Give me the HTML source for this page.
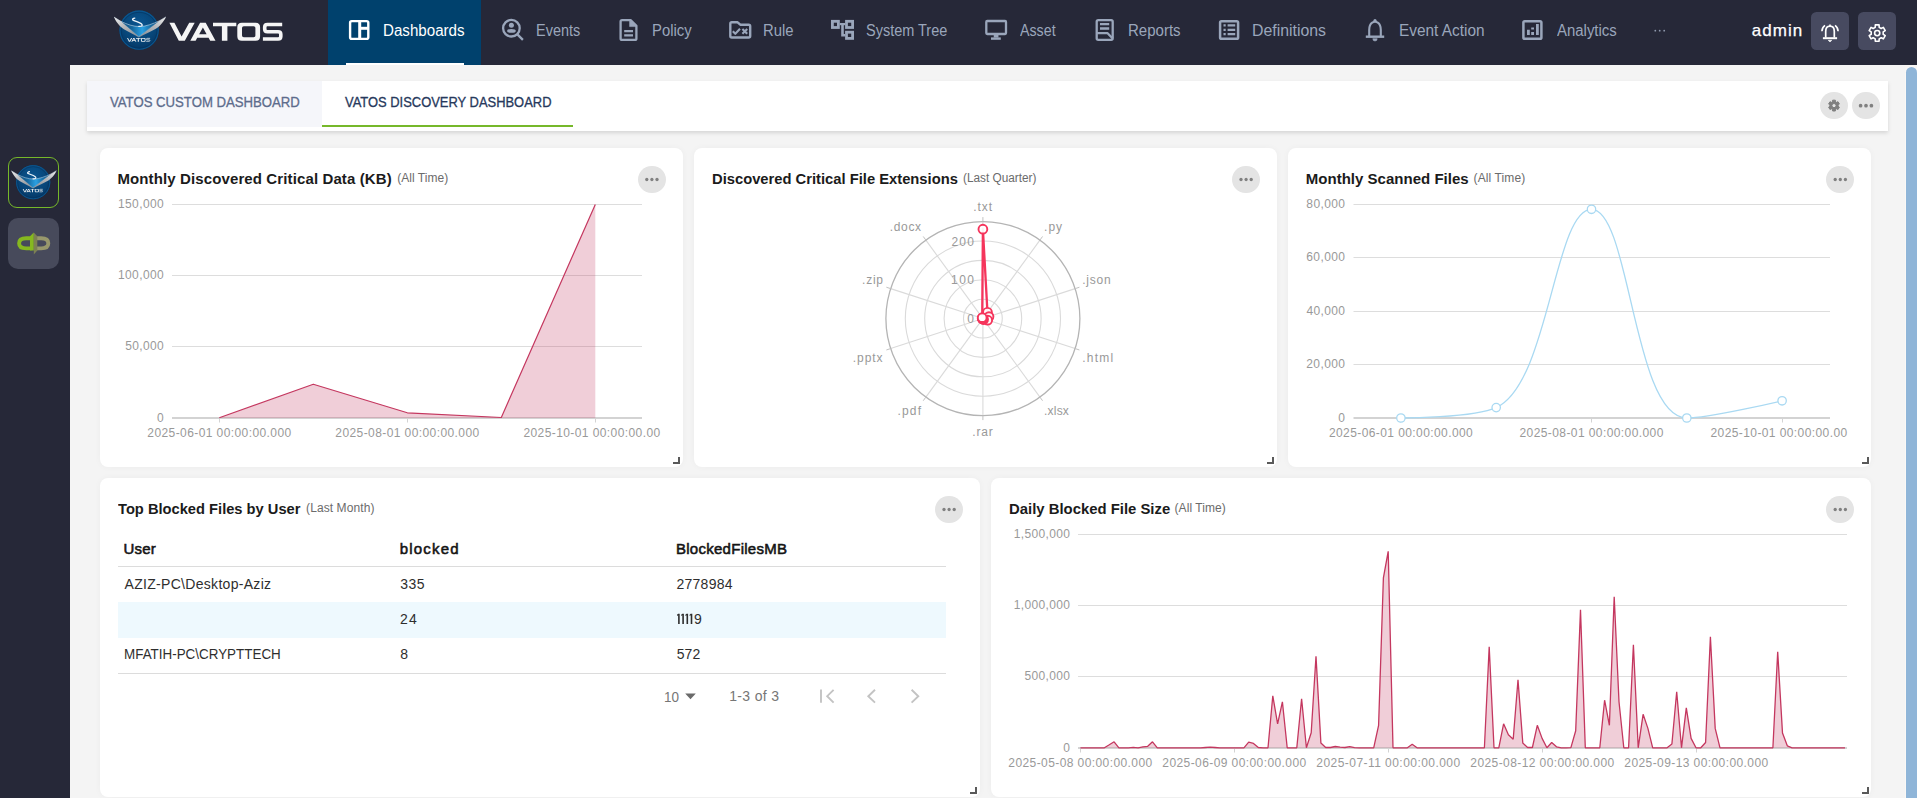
<!DOCTYPE html><html lang="en"><head><meta charset="utf-8"><title>VATOS Discovery Dashboard</title><style>
html,body{margin:0;padding:0;}
html{width:1917px;height:798px;overflow:hidden;}
body{width:1917px;height:798px;overflow:hidden;background:#f4f4f4;font-family:"Liberation Sans",sans-serif;position:relative;}
.t{position:absolute;white-space:nowrap;transform-origin:0 50%;font-family:"Liberation Sans",sans-serif;}
.abs{position:absolute;}
#topbar{position:absolute;left:0;top:0;width:1917px;height:65px;background:#262838;}
#sidebar{position:absolute;left:0;top:0;width:70px;height:798px;background:#262838;}
#navactive{position:absolute;left:328px;top:0;width:153px;height:65px;background:#00416d;}
#navline{position:absolute;left:346px;top:62.5px;width:118px;height:2.5px;background:#fff;}
.hbtn{position:absolute;top:12px;width:38px;height:38px;border-radius:5.5px;background:#474a60;}
#tabbar{position:absolute;left:87px;top:81px;width:1801px;height:49.5px;background:#fff;box-shadow:0 2px 4px rgba(0,0,0,0.13);}
#tab1{position:absolute;left:0;top:0;width:235px;height:46px;background:#f5f6fa;}
#tabul{position:absolute;left:235px;top:43.7px;width:251px;height:2.3px;background:#76b82a;}
.rbtn{position:absolute;border-radius:50%;background:#e4e4e4;}
.card{position:absolute;background:#fff;border-radius:8px;box-shadow:0 0 7px rgba(0,0,0,0.035);}
.rh{position:absolute;width:5px;height:5px;border-right:2px solid #595959;border-bottom:2px solid #595959;}
.c1{display:inline-block;position:relative;width:4.2px;height:14px;overflow:hidden;font-style:normal;color:transparent;vertical-align:top;}
.c9{display:inline-block;height:14px;font-style:normal;vertical-align:top;margin-left:-0.3px}
svg{position:absolute;left:0;top:0;overflow:visible;}
</style></head><body>
<svg width="0" height="0" style="position:absolute"><defs><radialGradient id="gCirc" cx="50%" cy="35%" r="70%"><stop offset="0" stop-color="#0a5590"/><stop offset="0.6" stop-color="#074679"/><stop offset="1" stop-color="#053461"/></radialGradient><linearGradient id="gV" x1="0" x2="1" y1="0" y2="0"><stop offset="0" stop-color="#0e4b78"/><stop offset="0.3" stop-color="#17699f"/><stop offset="0.56" stop-color="#2aa0e2"/><stop offset="0.8" stop-color="#17699f"/><stop offset="1" stop-color="#0e4b78"/></linearGradient><linearGradient id="gWL" x1="0" x2="1" y1="0" y2="1"><stop offset="0" stop-color="#f0f0f0"/><stop offset="0.4" stop-color="#b9bbbe"/><stop offset="1" stop-color="#85898e"/></linearGradient><linearGradient id="gWR" x1="1" x2="0" y1="0" y2="1"><stop offset="0" stop-color="#f0f0f0"/><stop offset="0.4" stop-color="#b9bbbe"/><stop offset="1" stop-color="#85898e"/></linearGradient><g id="wm" fill="#f5f5f5" fill-rule="evenodd"><path d="M169.4 22.8H174.4L181.6 36.5L189.2 22.8H194.7L184.8 40.7H178.8Z"/><path d="M190.3 40.7L200.1 22.8H205.7L215.5 40.7H210.2L208.56 37.7H197.24L195.6 40.7ZM202.9 27.4L199.16 34.2H206.64Z"/><path d="M213 22.8H236.3V26.3H227.4V40.7H221.9V26.3H213Z"/><path d="M241.8 22.8H255.6Q260.1 22.8 260.1 27.3V36.2Q260.1 40.7 255.6 40.7H241.8Q237.3 40.7 237.3 36.2V27.3Q237.3 22.8 241.8 22.8ZM243.8 26.3Q242 26.3 242 28.1V35.4Q242 37.2 243.8 37.2H253.6Q255.4 37.2 255.4 35.4V28.1Q255.4 26.3 253.6 26.3Z"/><path d="M282.2 24.55H267.4Q264.7 24.55 264.7 27V29.3Q264.7 31.75 267.4 31.75H278.1Q280.8 31.75 280.8 34.2V36.5Q280.8 38.95 278.1 38.95H262.9" fill="none" stroke="#f5f5f5" stroke-width="3.6"/></g><g id="emblem"><circle cx="0" cy="0" r="19.6" fill="url(#gCirc)"/><circle cx="0" cy="0" r="19.1" fill="none" stroke="#0a568f" stroke-width="1.1"/><circle cx="0" cy="0" r="17.9" fill="none" stroke="#04305a" stroke-width="0.5"/><path d="M-25.1 -13.1C-23.6 -9 -19.6 -3.6 -15.2 -1C-10.5 1.6 -5 4.3 -0.3 7.2L-0.3 6.45L-18.15 -8.83Z" fill="url(#gWL)"/><path d="M26.8 -13.3C25 -9 20.6 -3.6 15.8 -1C11 1.6 5 4.3 -0.3 7.2L-0.3 6.45L19.9 -9.2Z" fill="url(#gWR)"/><path d="M-18.15 -8.83C-12 -5.8 -6 -3.6 0.87 -3.64C7 -3.8 14 -6.5 19.9 -9.2L-0.3 6.45Z" fill="url(#gV)"/><path d="M-25.1 -13.1L-18.15 -8.83C-12 -5.8 -6 -3.6 0.87 -3.64C7 -3.8 14 -6.5 19.9 -9.2L26.8 -13.3" fill="none" stroke="#d6e6f2" stroke-width="0.55"/><path d="M-18.15 -8.83L-0.3 6.45L19.9 -9.2" fill="none" stroke="#dfe9f1" stroke-width="0.35" opacity="0.8"/><path d="M-4.3 -12.1C-6 -12 -7 -10.9 -6.3 -10.3C-5 -9.2 -0.5 -8.3 2 -6.6C3.4 -5.6 3.4 -4.6 2.3 -4.2C1.5 -3.9 0.5 -3.85 -0.3 -3.9" fill="none" stroke="#eef4f9" stroke-width="1.3" stroke-linecap="round"/><use href="#wm" transform="translate(-12.1,7.8) scale(0.205) translate(-169.4,-22.8)" opacity="0.95"/></g></defs></svg>
<div id="topbar"></div><div id="sidebar"></div><div id="navactive"></div><div id="navline"></div>
<svg id="logo" width="300" height="65" viewBox="0 0 300 65"><use href="#emblem" transform="translate(139.1,30.2)"/><use href="#wm"/></svg>
<svg id="navicons" width="1917" height="65" viewBox="0 0 1917 65" fill="none" stroke-linejoin="round" stroke-linecap="butt"><g stroke="#fff" stroke-width="2.4"><rect x="350.1" y="21.1" width="18.2" height="17.8" rx="1.6"/><path d="M359.7 21V39" stroke-width="3"/><path d="M359.7 28.3H368.5" stroke-width="3"/></g><g stroke="#9aa6bb" stroke-width="2.3" fill="none"><circle cx="511.4" cy="28.2" r="8.3"/><path d="M517.6 34.6L522.9 39.9" stroke-width="2.3"/><circle cx="511.4" cy="25.3" r="2.5" fill="#9aa6bb" stroke="none"/><ellipse cx="511.4" cy="30.9" rx="4.4" ry="1.9" fill="#9aa6bb" stroke="none"/><path d="M620.6 21.6Q620.6 20.1 622.1 20.1H630.6L636.4 25.9V38.4Q636.4 39.9 634.9 39.9H622.1Q620.6 39.9 620.6 38.4Z"/><path d="M629.6 19.6V26.6H636.9Z" fill="#9aa6bb" stroke-width="0.6"/><path d="M624.2 31.1H633M624.2 35.4H633" stroke-width="2.4"/><path d="M730.3 23.8Q730.3 22.3 731.8 22.3H737.6L740.3 24.7H748.7Q750.2 24.7 750.2 26.2V36Q750.2 37.5 748.7 37.5H731.8Q730.3 37.5 730.3 36Z" stroke-width="2.4"/><path d="M732.8 31.3L735.3 33.8L740 28.8" stroke-width="2.1"/><path d="M742.4 29L747.2 33.8M747.2 29L742.4 33.8" stroke-width="2.1"/><g stroke-width="2.8" stroke-linejoin="miter"><rect x="832.4" y="21.3" width="6" height="6.2"/><rect x="846.5" y="21.3" width="6.1" height="6.2"/><rect x="846.5" y="32.2" width="6.1" height="6.2"/></g><path d="M839.8 24.1H845.1" stroke-width="2.2"/><path d="M842.5 24.1V35.2H845.1" stroke-width="2.6" stroke-linejoin="miter"/><rect x="986.3" y="21" width="19.7" height="13" rx="0.9"/><path d="M996.1 35V37.6" stroke-width="4.7"/><path d="M991 38.6H1000.8" stroke-width="2.4"/><path d="M1096.7 21.7Q1096.7 20.2 1098.2 20.2H1111.2Q1112.7 20.2 1112.7 21.7V38.3Q1112.7 39.8 1111.2 39.8H1098.2Q1096.7 39.8 1096.7 38.3Z"/><path d="M1100 24.2H1109.2M1100 28.5H1109.2" stroke-width="2.3"/><path d="M1096.7 33.2H1107.6L1112.7 38.5" stroke-width="2.3"/><rect x="1220.1" y="21.2" width="18" height="17.6" rx="1.4" stroke-width="2.5"/><path d="M1223.5 25.3H1225.7M1227.6 25.3H1235.2M1223.5 29.8H1225.7M1227.6 29.8H1235.2M1223.5 34.2H1225.7M1227.6 34.2H1235.2" stroke-width="2.2"/><path d="M1369.2 36V30Q1369.2 24.5 1372.2 22.6Q1375 21 1377.8 22.6Q1380.8 24.5 1380.8 30V36" stroke-width="2.1"/><path d="M1365.8 36.7H1384.2" stroke-width="2.4"/><circle cx="1375" cy="20.5" r="1.6" fill="#9aa6bb" stroke="none"/><path d="M1372.8 38.7H1377.2Q1377.2 41 1375 41Q1372.8 41 1372.8 38.7Z" fill="#9aa6bb" stroke-width="0.6"/><rect x="1523.4" y="21.2" width="18" height="17.6" rx="1.4" stroke-width="2.5"/><path d="M1528.4 29.8V34.9M1532.6 27.4V29.6M1532.6 32V34.9M1537.4 24V34.9" stroke-width="2.8"/></g><g fill="#8f99ad"><circle cx="1655.3" cy="30.7" r="0.9"/><circle cx="1659.7" cy="30.7" r="0.9"/><circle cx="1664.2" cy="30.7" r="0.9"/></g></svg>
<span class="t" style="left:382.56px;top:23.00px;font-size:16px;line-height:16px;color:#fff;transform:scaleX(0.9457);">Dashboards</span><span class="t" style="left:536.01px;top:23.00px;font-size:16px;line-height:16px;color:#9aa6bb;transform:scaleX(0.9038);">Events</span><span class="t" style="left:652.08px;top:23.00px;font-size:16px;line-height:16px;color:#9aa6bb;transform:scaleX(0.9288);">Policy</span><span class="t" style="left:763.49px;top:23.00px;font-size:16px;line-height:16px;color:#9aa6bb;transform:scaleX(0.9257);">Rule</span><span class="t" style="left:866.35px;top:23.00px;font-size:16px;line-height:16px;color:#9aa6bb;transform:scaleX(0.9051);">System Tree</span><span class="t" style="left:1019.97px;top:23.00px;font-size:16px;line-height:16px;color:#9aa6bb;transform:scaleX(0.8903);">Asset</span><span class="t" style="left:1128.27px;top:23.00px;font-size:16px;line-height:16px;color:#9aa6bb;transform:scaleX(0.9385);">Reports</span><span class="t" style="left:1252.40px;top:23.00px;font-size:16px;line-height:16px;color:#9aa6bb;transform:scaleX(0.9902);">Definitions</span><span class="t" style="left:1398.74px;top:23.00px;font-size:16px;line-height:16px;color:#9aa6bb;transform:scaleX(0.9618);">Event Action</span><span class="t" style="left:1556.97px;top:23.00px;font-size:16px;line-height:16px;color:#9aa6bb;transform:scaleX(0.9336);">Analytics</span><span class="t" style="left:1751.69px;top:22.00px;font-size:17px;line-height:17px;color:#fff;letter-spacing:1.049px;-webkit-text-stroke:0.25px #fff;">admin</span>
<div class="hbtn" style="left:1811px"></div><div class="hbtn" style="left:1858px"></div><svg id="hdricons" width="1917" height="65" viewBox="0 0 1917 65" fill="none" stroke="#fff" stroke-width="1.7"><path d="M1825.7 37.6V31.4Q1825.7 26.2 1830 26.2Q1834.3 26.2 1834.3 31.4V37.6"/><path d="M1822.9 38.2H1837.1" stroke-width="2"/><path d="M1828.2 40.3H1831.8L1830 42Z" fill="#fff" stroke-width="0.6"/><path d="M1821.9 31.3Q1822 27.4 1825 25.3M1838.1 31.3Q1838 27.4 1835 25.3" stroke-width="1.6"/><path d="M1830 24.6V26" stroke-width="1.6"/><path d="M1875.31 24.92L1879.09 24.92L1879.19 27.33L1881.20 28.50L1883.34 27.37L1885.23 30.64L1883.19 31.94L1883.19 34.26L1885.23 35.56L1883.34 38.83L1881.20 37.70L1879.19 38.87L1879.09 41.28L1875.31 41.28L1875.21 38.87L1873.20 37.70L1871.06 38.83L1869.17 35.56L1871.21 34.26L1871.21 31.94L1869.17 30.64L1871.06 27.37L1873.20 28.50L1875.21 27.33Z" stroke-linejoin="round" stroke-width="1.6"/><circle cx="1877.2" cy="33.1" r="2.6" stroke-width="1.6"/></svg>
<div class="abs" style="left:8px;top:157px;width:49px;height:49px;border:1px solid #76b82a;border-radius:9px;background:#252737;"></div><div class="abs" style="left:8px;top:218px;width:51px;height:51px;border-radius:10px;background:#474a5b;"></div><svg id="sideicons" width="70" height="300" viewBox="0 0 70 300"><use href="#emblem" transform="translate(33.2,182.2) scale(0.87)"/><g fill="none" stroke-width="3.9"><path d="M31.6 238.2H26.2Q19.1 238.2 19.1 243.3Q19.1 248.4 26.2 248.4H31.6" stroke="#86b81f"/><path d="M36 238.2H41.2Q48.3 238.2 48.3 243.3Q48.3 248.4 41.2 248.4H36" stroke="#98986c"/></g><path d="M30 236.2L33.8 232.6V250.4H30Z" fill="#86b81f"/><path d="M33.8 232.6V254.4L37.3 250.6V236.2Z" fill="#7d8054"/></svg>
<div id="tabbar"><div id="tab1"></div><div id="tabul"></div></div><span class="t" style="left:109.75px;top:95.00px;font-size:14px;line-height:14px;color:#5d6c8c;transform:scaleX(0.9400);-webkit-text-stroke:0.3px #5d6c8c;">VATOS CUSTOM DASHBOARD</span><span class="t" style="left:344.95px;top:95.00px;font-size:14px;line-height:14px;color:#27395c;transform:scaleX(0.9236);-webkit-text-stroke:0.3px #27395c;">VATOS DISCOVERY DASHBOARD</span><div class="rbtn" style="left:1820.2px;top:91.8px;width:27.6px;height:27.6px"></div><div class="rbtn" style="left:1852.2px;top:91.8px;width:27.6px;height:27.6px"></div><svg width="1917" height="140" viewBox="0 0 1917 140"><path d="M1832.65 100.17L1835.35 100.17L1835.54 101.80L1836.52 102.37L1838.03 101.71L1839.38 104.06L1838.06 105.03L1838.06 106.17L1839.38 107.14L1838.03 109.49L1836.52 108.83L1835.54 109.40L1835.35 111.03L1832.65 111.03L1832.46 109.40L1831.48 108.83L1829.97 109.49L1828.62 107.14L1829.94 106.17L1829.94 105.03L1828.62 104.06L1829.97 101.71L1831.48 102.37L1832.46 101.80ZM1831.9 105.6a2.1 2.1 0 1 0 4.2 0a2.1 2.1 0 1 0 -4.2 0Z" fill="#808080" fill-rule="evenodd" stroke="#808080" stroke-width="1" stroke-linejoin="round"/><circle cx="1860.6" cy="105.7" r="1.85" fill="#808080"/><circle cx="1866.0" cy="105.7" r="1.85" fill="#808080"/><circle cx="1871.4" cy="105.7" r="1.85" fill="#808080"/></svg>
<div class="card" style="left:100px;top:148px;width:582.9px;height:318.7px"></div><span class="t" style="left:117.41px;top:171.00px;font-size:15px;line-height:15px;color:#1b1b1b;font-weight:bold;letter-spacing:0.119px;">Monthly Discovered Critical Data (KB)</span><span class="t" style="left:397.26px;top:172.00px;font-size:12px;line-height:12px;color:#6b6b6b;letter-spacing:0.025px;">(All Time)</span><div class="rbtn" style="left:638.0px;top:165.6px;width:27.8px;height:27.8px"></div><svg width="1917" height="798" viewBox="0 0 1917 798"><circle cx="646.8" cy="179.5" r="1.65" fill="#808080"/><circle cx="651.9" cy="179.5" r="1.65" fill="#808080"/><circle cx="657.0" cy="179.5" r="1.65" fill="#808080"/></svg><div class="rh" style="left:673.1px;top:457.1px"></div><svg width="1917" height="798" viewBox="0 0 1917 798" shape-rendering="auto"><path d="M172 204.5H642" stroke="#dddddd" stroke-width="1"/><path d="M172 275.5H642" stroke="#dddddd" stroke-width="1"/><path d="M172 346.5H642" stroke="#dddddd" stroke-width="1"/><path d="M172 418H642" stroke="#d3d3d3" stroke-width="2"/><path d="M219.5 419V422.5" stroke="#d3d3d3" stroke-width="1"/><path d="M407.5 419V422.5" stroke="#d3d3d3" stroke-width="1"/><path d="M595.5 419V422.5" stroke="#d3d3d3" stroke-width="1"/><path d="M219.3 417.8L313.3 384.2L407.3 412.8L501.3 417.5L595.3 204.4L595.3 418L219.3 418Z" fill="#c23b62" fill-opacity="0.25"/><path d="M219.3 417.8L313.3 384.2L407.3 412.8L501.3 417.5L595.3 204.4" fill="none" stroke="#c4375f" stroke-width="1.2" stroke-linejoin="round"/></svg><span class="t" style="left:117.88px;top:198.00px;font-size:12px;line-height:12px;color:#999999;letter-spacing:0.415px;">150,000</span><span class="t" style="left:117.88px;top:269.00px;font-size:12px;line-height:12px;color:#999999;letter-spacing:0.415px;">100,000</span><span class="t" style="left:125.16px;top:340.00px;font-size:12px;line-height:12px;color:#999999;letter-spacing:0.380px;">50,000</span><span class="t" style="left:157.08px;top:411.50px;font-size:12px;line-height:12px;color:#999999;">0</span><span class="t" style="left:147.30px;top:427.00px;font-size:12px;line-height:12px;color:#999999;letter-spacing:0.412px;">2025-06-01 00:00:00.000</span><span class="t" style="left:335.30px;top:427.00px;font-size:12px;line-height:12px;color:#999999;letter-spacing:0.412px;">2025-08-01 00:00:00.000</span><span class="t" style="left:523.40px;top:427.00px;font-size:12px;line-height:12px;color:#999999;letter-spacing:0.412px;">2025-10-01 00:00:00.00</span>
<div class="card" style="left:694.2px;top:148px;width:582.8999999999999px;height:318.7px"></div><span class="t" style="left:711.63px;top:171.00px;font-size:15px;line-height:15px;color:#1b1b1b;font-weight:bold;transform:scaleX(0.9831);">Discovered Critical File Extensions</span><span class="t" style="left:962.57px;top:172.00px;font-size:12px;line-height:12px;color:#6b6b6b;transform:scaleX(0.9822);">(Last Quarter)</span><div class="rbtn" style="left:1232.1999999999998px;top:165.6px;width:27.8px;height:27.8px"></div><svg width="1917" height="798" viewBox="0 0 1917 798"><circle cx="1241.0" cy="179.5" r="1.65" fill="#808080"/><circle cx="1246.1" cy="179.5" r="1.65" fill="#808080"/><circle cx="1251.2" cy="179.5" r="1.65" fill="#808080"/></svg><div class="rh" style="left:1267.3px;top:457.1px"></div><svg width="1917" height="798" viewBox="0 0 1917 798"><circle cx="982.9" cy="318.6" r="19.40" fill="none" stroke="#dadada" stroke-width="1.1"/><circle cx="982.9" cy="318.6" r="38.80" fill="none" stroke="#dadada" stroke-width="1.1"/><circle cx="982.9" cy="318.6" r="58.20" fill="none" stroke="#dadada" stroke-width="1.1"/><circle cx="982.9" cy="318.6" r="77.60" fill="none" stroke="#dadada" stroke-width="1.1"/><path d="M982.9 318.6L982.90 221.60" stroke="#dadada" stroke-width="1.1"/><path d="M982.9 318.6L1039.92 240.13" stroke="#dadada" stroke-width="1.1"/><path d="M982.9 318.6L1075.15 288.63" stroke="#dadada" stroke-width="1.1"/><path d="M982.9 318.6L1075.15 348.57" stroke="#dadada" stroke-width="1.1"/><path d="M982.9 318.6L1039.92 397.07" stroke="#dadada" stroke-width="1.1"/><path d="M982.9 318.6L982.90 415.60" stroke="#dadada" stroke-width="1.1"/><path d="M982.9 318.6L925.88 397.07" stroke="#dadada" stroke-width="1.1"/><path d="M982.9 318.6L890.65 348.57" stroke="#dadada" stroke-width="1.1"/><path d="M982.9 318.6L890.65 288.63" stroke="#dadada" stroke-width="1.1"/><path d="M982.9 318.6L925.88 240.13" stroke="#dadada" stroke-width="1.1"/><circle cx="982.9" cy="318.6" r="97" fill="none" stroke="#b4b4b4" stroke-width="1.3"/><path d="M982.90 221.60L982.90 217.10" stroke="#c2c2c2" stroke-width="1"/><path d="M1039.92 240.13L1042.56 236.48" stroke="#c2c2c2" stroke-width="1"/><path d="M1075.15 288.63L1079.43 287.23" stroke="#c2c2c2" stroke-width="1"/><path d="M1075.15 348.57L1079.43 349.97" stroke="#c2c2c2" stroke-width="1"/><path d="M1039.92 397.07L1042.56 400.72" stroke="#c2c2c2" stroke-width="1"/><path d="M982.90 415.60L982.90 420.10" stroke="#c2c2c2" stroke-width="1"/><path d="M925.88 397.07L923.24 400.72" stroke="#c2c2c2" stroke-width="1"/><path d="M890.65 348.57L886.37 349.97" stroke="#c2c2c2" stroke-width="1"/><path d="M890.65 288.63L886.37 287.23" stroke="#c2c2c2" stroke-width="1"/><path d="M925.88 240.13L923.24 236.48" stroke="#c2c2c2" stroke-width="1"/><path d="M982.90 229.17L987.46 312.32L988.99 316.62L987.70 320.16L983.58 319.54L982.90 318.99L982.67 318.91L982.53 318.72L982.16 318.36L982.22 317.66Z" fill="none" stroke="#f5355c" stroke-width="2.3" stroke-linejoin="round"/><circle cx="982.90" cy="229.17" r="4.4" fill="#fff" fill-opacity="0.93" stroke="#f5355c" stroke-width="1.9"/><circle cx="987.46" cy="312.32" r="4.4" fill="#fff" fill-opacity="0.93" stroke="#f5355c" stroke-width="1.9"/><circle cx="988.99" cy="316.62" r="4.4" fill="#fff" fill-opacity="0.93" stroke="#f5355c" stroke-width="1.9"/><circle cx="987.70" cy="320.16" r="4.4" fill="#fff" fill-opacity="0.93" stroke="#f5355c" stroke-width="1.9"/><circle cx="983.58" cy="319.54" r="4.4" fill="#fff" fill-opacity="0.93" stroke="#f5355c" stroke-width="1.9"/><circle cx="982.90" cy="318.99" r="4.4" fill="#fff" fill-opacity="0.93" stroke="#f5355c" stroke-width="1.9"/><circle cx="982.67" cy="318.91" r="4.4" fill="#fff" fill-opacity="0.93" stroke="#f5355c" stroke-width="1.9"/><circle cx="982.53" cy="318.72" r="4.4" fill="#fff" fill-opacity="0.93" stroke="#f5355c" stroke-width="1.9"/><circle cx="982.16" cy="318.36" r="4.4" fill="#fff" fill-opacity="0.93" stroke="#f5355c" stroke-width="1.9"/><circle cx="982.22" cy="317.66" r="4.4" fill="#fff" fill-opacity="0.93" stroke="#f5355c" stroke-width="1.9"/></svg><span class="t" style="left:951.40px;top:235.50px;font-size:12px;line-height:12px;color:#999999;letter-spacing:1.270px;">200</span><span class="t" style="left:951.09px;top:274.00px;font-size:12px;line-height:12px;color:#999999;letter-spacing:1.426px;">100</span><span class="t" style="left:967.28px;top:313.00px;font-size:12px;line-height:12px;color:#999999;">0</span><span class="t" style="left:973.31px;top:201.00px;font-size:12px;line-height:12px;color:#999999;letter-spacing:0.923px;">.txt</span><span class="t" style="left:1044.11px;top:221.00px;font-size:12px;line-height:12px;color:#999999;letter-spacing:0.954px;">.py</span><span class="t" style="left:1082.31px;top:273.50px;font-size:12px;line-height:12px;color:#999999;letter-spacing:0.729px;">.json</span><span class="t" style="left:1082.31px;top:351.50px;font-size:12px;line-height:12px;color:#999999;letter-spacing:1.195px;">.html</span><span class="t" style="left:1044.11px;top:405.00px;font-size:12px;line-height:12px;color:#999999;letter-spacing:0.178px;">.xlsx</span><span class="t" style="left:972.26px;top:425.50px;font-size:12px;line-height:12px;color:#999999;letter-spacing:0.861px;">.rar</span><span class="t" style="left:897.61px;top:405.00px;font-size:12px;line-height:12px;color:#999999;letter-spacing:1.117px;">.pdf</span><span class="t" style="left:852.71px;top:351.50px;font-size:12px;line-height:12px;color:#999999;letter-spacing:0.974px;">.pptx</span><span class="t" style="left:862.11px;top:273.50px;font-size:12px;line-height:12px;color:#999999;letter-spacing:0.737px;">.zip</span><span class="t" style="left:889.71px;top:221.00px;font-size:12px;line-height:12px;color:#999999;letter-spacing:0.683px;">.docx</span>
<div class="card" style="left:1288.4px;top:148px;width:582.8999999999999px;height:318.7px"></div><span class="t" style="left:1305.81px;top:171.00px;font-size:15px;line-height:15px;color:#1b1b1b;font-weight:bold;letter-spacing:0.018px;">Monthly Scanned Files</span><span class="t" style="left:1473.56px;top:172.00px;font-size:12px;line-height:12px;color:#6b6b6b;letter-spacing:0.114px;">(All Time)</span><div class="rbtn" style="left:1826.3999999999999px;top:165.6px;width:27.8px;height:27.8px"></div><svg width="1917" height="798" viewBox="0 0 1917 798"><circle cx="1835.2" cy="179.5" r="1.65" fill="#808080"/><circle cx="1840.3" cy="179.5" r="1.65" fill="#808080"/><circle cx="1845.4" cy="179.5" r="1.65" fill="#808080"/></svg><div class="rh" style="left:1861.5px;top:457.1px"></div><svg width="1917" height="798" viewBox="0 0 1917 798"><path d="M1353.5 204.5H1830" stroke="#dddddd" stroke-width="1"/><path d="M1353.5 257.5H1830" stroke="#dddddd" stroke-width="1"/><path d="M1353.5 311.5H1830" stroke="#dddddd" stroke-width="1"/><path d="M1353.5 364.5H1830" stroke="#dddddd" stroke-width="1"/><path d="M1353.5 418H1830" stroke="#d3d3d3" stroke-width="2"/><path d="M1400.5 419V422.5" stroke="#d3d3d3" stroke-width="1"/><path d="M1591.5 419V422.5" stroke="#d3d3d3" stroke-width="1"/><path d="M1782.5 419V422.5" stroke="#d3d3d3" stroke-width="1"/><path d="M1400.90 418.00C1400.90 418.00 1473.06 418.00 1496.20 407.60C1549.30 383.73 1554.18 209.30 1591.50 209.30C1630.42 209.30 1633.19 418.00 1686.80 418.00C1709.43 418.00 1782.10 400.80 1782.10 400.80" fill="none" stroke="#a9d9f2" stroke-width="1.3"/><circle cx="1400.9" cy="418" r="4.2" fill="#fff" stroke="#a9d9f2" stroke-width="1.3"/><circle cx="1496.2" cy="407.6" r="4.2" fill="#fff" stroke="#a9d9f2" stroke-width="1.3"/><circle cx="1591.5" cy="209.3" r="4.2" fill="#fff" stroke="#a9d9f2" stroke-width="1.3"/><circle cx="1686.8" cy="418" r="4.2" fill="#fff" stroke="#a9d9f2" stroke-width="1.3"/><circle cx="1782.1" cy="400.8" r="4.2" fill="#fff" stroke="#a9d9f2" stroke-width="1.3"/></svg><span class="t" style="left:1306.33px;top:198.00px;font-size:12px;line-height:12px;color:#999999;letter-spacing:0.387px;">80,000</span><span class="t" style="left:1306.24px;top:251.00px;font-size:12px;line-height:12px;color:#999999;letter-spacing:0.404px;">60,000</span><span class="t" style="left:1306.58px;top:305.00px;font-size:12px;line-height:12px;color:#999999;letter-spacing:0.336px;">40,000</span><span class="t" style="left:1306.24px;top:358.00px;font-size:12px;line-height:12px;color:#999999;letter-spacing:0.404px;">20,000</span><span class="t" style="left:1338.28px;top:411.50px;font-size:12px;line-height:12px;color:#999999;">0</span><span class="t" style="left:1328.90px;top:427.00px;font-size:12px;line-height:12px;color:#999999;letter-spacing:0.412px;">2025-06-01 00:00:00.000</span><span class="t" style="left:1519.50px;top:427.00px;font-size:12px;line-height:12px;color:#999999;letter-spacing:0.412px;">2025-08-01 00:00:00.000</span><span class="t" style="left:1710.50px;top:427.00px;font-size:12px;line-height:12px;color:#999999;letter-spacing:0.407px;">2025-10-01 00:00:00.00</span>
<div class="card" style="left:100px;top:478px;width:880.1px;height:318.70000000000005px"></div><span class="t" style="left:118.24px;top:501.00px;font-size:15px;line-height:15px;color:#1b1b1b;font-weight:bold;transform:scaleX(0.9787);">Top Blocked Files by User</span><span class="t" style="left:306.06px;top:502.00px;font-size:12px;line-height:12px;color:#6b6b6b;letter-spacing:0.094px;">(Last Month)</span><div class="rbtn" style="left:935.2px;top:495.6px;width:27.8px;height:27.8px"></div><svg width="1917" height="798" viewBox="0 0 1917 798"><circle cx="944.0" cy="509.5" r="1.65" fill="#808080"/><circle cx="949.1" cy="509.5" r="1.65" fill="#808080"/><circle cx="954.2" cy="509.5" r="1.65" fill="#808080"/></svg><div class="rh" style="left:970.3px;top:787.1px"></div><div class="abs" style="left:118px;top:566px;width:828px;height:1px;background:#dcdcdc"></div><div class="abs" style="left:118px;top:602.3px;width:828px;height:35.4px;background:#eef9fe"></div><div class="abs" style="left:118px;top:673px;width:828px;height:1px;background:#dcdcdc"></div><span class="t" style="left:123.44px;top:541.00px;font-size:15px;line-height:15px;color:#141414;letter-spacing:0.243px;-webkit-text-stroke:0.55px #141414;">User</span><span class="t" style="left:399.84px;top:541.00px;font-size:15px;line-height:15px;color:#141414;letter-spacing:1.169px;-webkit-text-stroke:0.55px #141414;">blocked</span><span class="t" style="left:675.97px;top:541.00px;font-size:15px;line-height:15px;color:#141414;letter-spacing:0.267px;-webkit-text-stroke:0.55px #141414;">BlockedFilesMB</span><span class="t" style="left:124.57px;top:577.00px;font-size:14px;line-height:14px;color:#2e2e2e;letter-spacing:0.301px;">AZIZ-PC\Desktop-Aziz</span><span class="t" style="left:400.27px;top:577.00px;font-size:14px;line-height:14px;color:#2e2e2e;letter-spacing:0.477px;">335</span><span class="t" style="left:676.50px;top:577.00px;font-size:14px;line-height:14px;color:#2e2e2e;letter-spacing:0.251px;">2778984</span><span class="t" style="left:400.10px;top:612.00px;font-size:14px;line-height:14px;color:#2e2e2e;letter-spacing:1.038px;">24</span><span class="t" style="left:677.5px;top:612px;font-size:14px;line-height:14px;height:14px;color:#2e2e2e"><i class="c1">1</i><i class="c1">1</i><i class="c1">1</i><i class="c1">1</i><i class="c9">9</i></span><span class="t" style="left:123.50px;top:647.00px;font-size:14px;line-height:14px;color:#2e2e2e;transform:scaleX(0.9584);">MFATIH-PC\CRYPTTECH</span><span class="t" style="left:400.20px;top:647.00px;font-size:14px;line-height:14px;color:#2e2e2e;">8</span><span class="t" style="left:676.64px;top:647.00px;font-size:14px;line-height:14px;color:#2e2e2e;letter-spacing:0.204px;">572</span><span class="t" style="left:663.67px;top:690.00px;font-size:14px;line-height:14px;color:#767676;transform:scaleX(0.9662);">10</span><span class="t" style="left:729.24px;top:689.00px;font-size:14px;line-height:14px;color:#767676;letter-spacing:0.327px;">1-3 of 3</span><svg width="1917" height="798" viewBox="0 0 1917 798" fill="none"><path d="M678.10 613.8H679.70V624H678.10V615.3L677.00 615.9V614.7Z" fill="#2e2e2e"/><path d="M682.30 613.8H683.90V624H682.30V615.3L681.20 615.9V614.7Z" fill="#2e2e2e"/><path d="M686.50 613.8H688.10V624H686.50V615.3L685.40 615.9V614.7Z" fill="#2e2e2e"/><path d="M690.70 613.8H692.30V624H690.70V615.3L689.60 615.9V614.7Z" fill="#2e2e2e"/><path d="M685.2 693.6H695.8L690.5 699.2Z" fill="#6a6a6a"/><g stroke="#c3c3c3" stroke-width="1.9"><path d="M821 689.6V702.8"/><path d="M833.6 689.8L827.2 696.2L833.6 702.6"/><path d="M875 689.8L868.3 696.2L875 702.6"/><path d="M911.6 689.8L918.3 696.2L911.6 702.6"/></g></svg>
<div class="card" style="left:991.4px;top:478px;width:879.9px;height:318.70000000000005px"></div><span class="t" style="left:1008.82px;top:501.00px;font-size:15px;line-height:15px;color:#1b1b1b;font-weight:bold;transform:scaleX(0.9916);">Daily Blocked File Size</span><span class="t" style="left:1174.56px;top:502.00px;font-size:12px;line-height:12px;color:#6b6b6b;letter-spacing:0.058px;">(All Time)</span><div class="rbtn" style="left:1826.3999999999999px;top:495.6px;width:27.8px;height:27.8px"></div><svg width="1917" height="798" viewBox="0 0 1917 798"><circle cx="1835.2" cy="509.5" r="1.65" fill="#808080"/><circle cx="1840.3" cy="509.5" r="1.65" fill="#808080"/><circle cx="1845.4" cy="509.5" r="1.65" fill="#808080"/></svg><div class="rh" style="left:1861.5px;top:787.1px"></div><svg width="1917" height="798" viewBox="0 0 1917 798"><path d="M1078 534.5H1847" stroke="#dddddd" stroke-width="1"/><path d="M1078 605.5H1847" stroke="#dddddd" stroke-width="1"/><path d="M1078 676.5H1847" stroke="#dddddd" stroke-width="1"/><path d="M1078 748H1847" stroke="#d3d3d3" stroke-width="2"/><path d="M1080.5 749V752.5" stroke="#d3d3d3" stroke-width="1"/><path d="M1234.5 749V752.5" stroke="#d3d3d3" stroke-width="1"/><path d="M1388.5 749V752.5" stroke="#d3d3d3" stroke-width="1"/><path d="M1542.5 749V752.5" stroke="#d3d3d3" stroke-width="1"/><path d="M1696.5 749V752.5" stroke="#d3d3d3" stroke-width="1"/><path d="M1080.4 747.8L1085.2 747.8L1090.0 747.8L1094.8 747.8L1099.6 747.8L1104.4 747.8L1109.3 744.8L1114.1 741.8L1118.9 747.8L1123.7 747.8L1128.5 747.8L1133.3 747.4L1138.1 747.8L1142.9 746.8L1147.7 746.3L1152.5 741.8L1157.3 747.8L1162.2 747.8L1167.0 747.8L1171.8 747.8L1176.6 747.8L1181.4 747.8L1186.2 747.8L1191.0 747.8L1195.8 747.8L1200.6 747.8L1205.4 747.5L1210.2 747.2L1215.1 747.5L1219.9 747.8L1224.7 747.8L1229.5 747.8L1234.3 747.8L1239.1 747.8L1243.9 747.8L1248.7 742.2L1253.5 743.4L1258.3 747.5L1263.1 747.8L1268.0 747.8L1272.8 695.8L1277.6 723.8L1282.4 701.8L1287.2 747.8L1292.0 747.8L1296.8 747.8L1301.6 698.8L1306.4 747.8L1311.2 732.8L1316.0 656.3L1320.9 743.1L1325.7 747.5L1330.5 747.5L1335.3 746.5L1340.1 747.2L1344.9 747.5L1349.7 746.6L1354.5 747.6L1359.3 747.8L1364.1 747.8L1368.9 747.8L1373.7 747.8L1378.6 725.3L1383.4 577.8L1388.2 551.3L1393.0 747.8L1397.8 747.8L1402.6 747.8L1407.4 747.8L1412.2 744.3L1417.0 747.8L1421.8 747.8L1426.6 747.8L1431.5 747.8L1436.3 747.8L1441.1 747.8L1445.9 747.8L1450.7 747.8L1455.5 747.8L1460.3 747.8L1465.1 747.8L1469.9 747.8L1474.7 747.8L1479.5 747.8L1484.4 747.8L1489.2 646.8L1494.0 747.8L1498.8 747.8L1503.6 723.8L1508.4 734.8L1513.2 739.3L1518.0 679.8L1522.8 743.1L1527.6 747.5L1532.4 747.5L1537.3 725.3L1542.1 738.4L1546.9 747.8L1551.7 742.5L1556.5 746.8L1561.3 747.8L1566.1 747.8L1570.9 747.6L1575.7 730.8L1580.5 609.8L1585.3 747.8L1590.2 747.8L1595.0 747.8L1599.8 747.8L1604.6 700.2L1609.4 725.3L1614.2 596.8L1619.0 701.8L1623.8 747.8L1628.6 747.8L1633.4 644.8L1638.2 747.8L1643.1 714.3L1647.9 728.4L1652.7 747.8L1657.5 747.8L1662.3 747.8L1667.1 747.8L1671.9 744.0L1676.7 691.8L1681.5 747.8L1686.3 707.8L1691.1 738.4L1696.0 747.8L1700.8 747.8L1705.6 742.5L1710.4 636.8L1715.2 728.4L1720.0 747.8L1724.8 747.8L1729.6 747.8L1734.4 747.8L1739.2 747.8L1744.0 747.8L1748.9 747.8L1753.7 747.8L1758.5 747.8L1763.3 747.8L1768.1 747.8L1772.9 747.8L1777.7 651.8L1782.5 733.1L1787.3 745.8L1792.1 747.8L1796.9 747.8L1801.8 747.8L1806.6 747.8L1811.4 747.8L1816.2 747.8L1821.0 747.8L1825.8 747.8L1830.6 747.8L1835.4 747.8L1840.2 747.8L1845.0 747.8L1845.0 747.8L1080.4 747.8Z" fill="#c23b62" fill-opacity="0.25"/><path d="M1080.4 747.8L1085.2 747.8L1090.0 747.8L1094.8 747.8L1099.6 747.8L1104.4 747.8L1109.3 744.8L1114.1 741.8L1118.9 747.8L1123.7 747.8L1128.5 747.8L1133.3 747.4L1138.1 747.8L1142.9 746.8L1147.7 746.3L1152.5 741.8L1157.3 747.8L1162.2 747.8L1167.0 747.8L1171.8 747.8L1176.6 747.8L1181.4 747.8L1186.2 747.8L1191.0 747.8L1195.8 747.8L1200.6 747.8L1205.4 747.5L1210.2 747.2L1215.1 747.5L1219.9 747.8L1224.7 747.8L1229.5 747.8L1234.3 747.8L1239.1 747.8L1243.9 747.8L1248.7 742.2L1253.5 743.4L1258.3 747.5L1263.1 747.8L1268.0 747.8L1272.8 695.8L1277.6 723.8L1282.4 701.8L1287.2 747.8L1292.0 747.8L1296.8 747.8L1301.6 698.8L1306.4 747.8L1311.2 732.8L1316.0 656.3L1320.9 743.1L1325.7 747.5L1330.5 747.5L1335.3 746.5L1340.1 747.2L1344.9 747.5L1349.7 746.6L1354.5 747.6L1359.3 747.8L1364.1 747.8L1368.9 747.8L1373.7 747.8L1378.6 725.3L1383.4 577.8L1388.2 551.3L1393.0 747.8L1397.8 747.8L1402.6 747.8L1407.4 747.8L1412.2 744.3L1417.0 747.8L1421.8 747.8L1426.6 747.8L1431.5 747.8L1436.3 747.8L1441.1 747.8L1445.9 747.8L1450.7 747.8L1455.5 747.8L1460.3 747.8L1465.1 747.8L1469.9 747.8L1474.7 747.8L1479.5 747.8L1484.4 747.8L1489.2 646.8L1494.0 747.8L1498.8 747.8L1503.6 723.8L1508.4 734.8L1513.2 739.3L1518.0 679.8L1522.8 743.1L1527.6 747.5L1532.4 747.5L1537.3 725.3L1542.1 738.4L1546.9 747.8L1551.7 742.5L1556.5 746.8L1561.3 747.8L1566.1 747.8L1570.9 747.6L1575.7 730.8L1580.5 609.8L1585.3 747.8L1590.2 747.8L1595.0 747.8L1599.8 747.8L1604.6 700.2L1609.4 725.3L1614.2 596.8L1619.0 701.8L1623.8 747.8L1628.6 747.8L1633.4 644.8L1638.2 747.8L1643.1 714.3L1647.9 728.4L1652.7 747.8L1657.5 747.8L1662.3 747.8L1667.1 747.8L1671.9 744.0L1676.7 691.8L1681.5 747.8L1686.3 707.8L1691.1 738.4L1696.0 747.8L1700.8 747.8L1705.6 742.5L1710.4 636.8L1715.2 728.4L1720.0 747.8L1724.8 747.8L1729.6 747.8L1734.4 747.8L1739.2 747.8L1744.0 747.8L1748.9 747.8L1753.7 747.8L1758.5 747.8L1763.3 747.8L1768.1 747.8L1772.9 747.8L1777.7 651.8L1782.5 733.1L1787.3 745.8L1792.1 747.8L1796.9 747.8L1801.8 747.8L1806.6 747.8L1811.4 747.8L1816.2 747.8L1821.0 747.8L1825.8 747.8L1830.6 747.8L1835.4 747.8L1840.2 747.8L1845.0 747.8" fill="none" stroke="#c4375f" stroke-width="1.3" stroke-linejoin="bevel"/></svg><span class="t" style="left:1013.81px;top:528.00px;font-size:12px;line-height:12px;color:#999999;letter-spacing:0.344px;">1,500,000</span><span class="t" style="left:1013.81px;top:599.00px;font-size:12px;line-height:12px;color:#999999;letter-spacing:0.344px;">1,000,000</span><span class="t" style="left:1024.52px;top:670.00px;font-size:12px;line-height:12px;color:#999999;letter-spacing:0.343px;">500,000</span><span class="t" style="left:1063.28px;top:741.50px;font-size:12px;line-height:12px;color:#999999;">0</span><span class="t" style="left:1008.30px;top:757.00px;font-size:12px;line-height:12px;color:#999999;letter-spacing:0.412px;">2025-05-08 00:00:00.000</span><span class="t" style="left:1162.30px;top:757.00px;font-size:12px;line-height:12px;color:#999999;letter-spacing:0.412px;">2025-06-09 00:00:00.000</span><span class="t" style="left:1316.30px;top:757.00px;font-size:12px;line-height:12px;color:#999999;letter-spacing:0.453px;">2025-07-11 00:00:00.000</span><span class="t" style="left:1470.30px;top:757.00px;font-size:12px;line-height:12px;color:#999999;letter-spacing:0.412px;">2025-08-12 00:00:00.000</span><span class="t" style="left:1624.30px;top:757.00px;font-size:12px;line-height:12px;color:#999999;letter-spacing:0.412px;">2025-09-13 00:00:00.000</span>
<div class="abs" style="left:1905px;top:65px;width:12px;height:733px;background:#f7f5f3"></div>
<div class="abs" style="left:1906px;top:66.5px;width:11px;height:731.5px;background:#8fb5d8;border-radius:5.5px 5.5px 0 0;box-shadow:0 0 0 1px #faf8f6"></div>
</body></html>
